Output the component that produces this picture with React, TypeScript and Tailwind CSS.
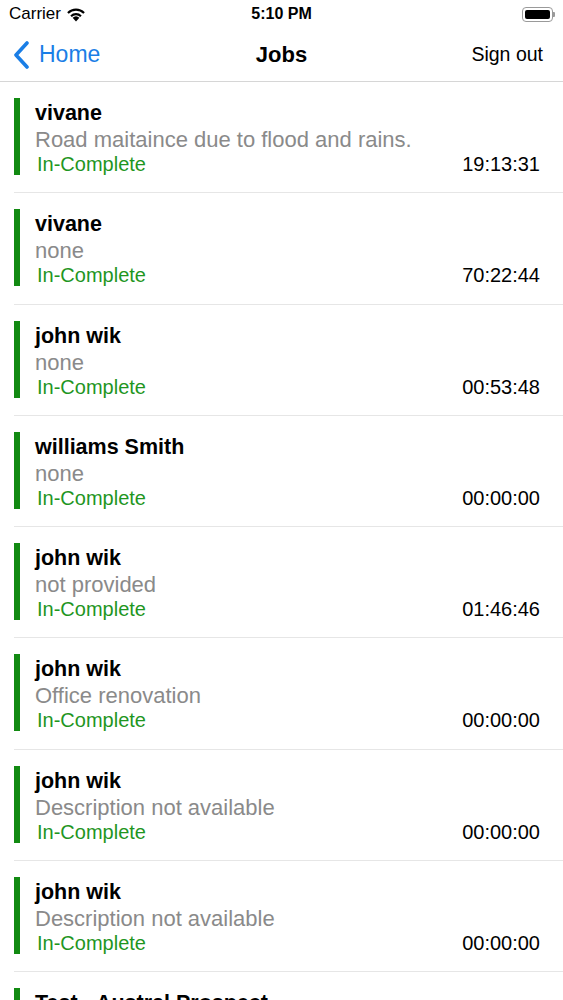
import React from "react";

type Job = {
    name: string;
    description: string;
    status: string;
    time: string;
};

const jobs: Job[] = [
    { name: "vivane", description: "Road maitaince due to flood and rains.", status: "In-Complete", time: "19:13:31" },
    { name: "vivane", description: "none", status: "In-Complete", time: "70:22:44" },
    { name: "john wik", description: "none", status: "In-Complete", time: "00:53:48" },
    { name: "williams Smith", description: "none", status: "In-Complete", time: "00:00:00" },
    { name: "john wik", description: "not provided", status: "In-Complete", time: "01:46:46" },
    { name: "john wik", description: "Office renovation", status: "In-Complete", time: "00:00:00" },
    { name: "john wik", description: "Description not available", status: "In-Complete", time: "00:00:00" },
    { name: "john wik", description: "Description not available", status: "In-Complete", time: "00:00:00" },
    { name: "Test - Austral Prospect", description: "none", status: "In-Complete", time: "00:00:00" },
];

const StatusBar: React.FC = () => {
    return (
        <div className="flex items-center justify-between h-[28px] pl-[9px] pr-[8px] text-[17px] text-black">
            <div className="flex items-center gap-[5px]">
                <span>Carrier</span>
                <svg width="20" height="15" viewBox="0 0 20 15">
                    <path d="M10 14.5 L6.6 10.8 A5 5 0 0 1 13.4 10.8 Z" fill="#000" />
                    <path d="M4.3 8.4 A8.2 8.2 0 0 1 15.7 8.4 L14.2 10 A6.1 6.1 0 0 0 5.8 10 Z" fill="#000" />
                    <path d="M1.2 5.2 A12.6 12.6 0 0 1 18.8 5.2 L17.3 6.8 A10.4 10.4 0 0 0 2.7 6.8 Z" fill="#000" />
                </svg>
            </div>
            <span className="absolute left-0 right-0 text-center font-semibold text-[16px] pointer-events-none">5:10 PM</span>
            <div className="flex items-center">
                <div className="w-[31px] h-[15px] rounded-[4px] border border-[#9a9a9a] p-[2px]">
                    <div className="w-full h-full rounded-[2px] bg-black" />
                </div>
                <div className="w-[2px] h-[5px] rounded-r-[1px] bg-[#9a9a9a]" />
            </div>
        </div>
    );
};

const NavBar: React.FC = () => {
    return (
        <div className="relative flex items-center justify-between h-[54px] border-b border-[#d6d6d6] pl-[12px] pr-[20px]">
            <div className="flex items-center gap-[9px] text-[#1a7ee6] text-[23px]">
                <svg width="18" height="28" viewBox="0 0 18 28">
                    <path d="M15 2 L4 14 L15 26" stroke="#1a7ee6" strokeWidth="3.6" fill="none" strokeLinecap="round" strokeLinejoin="round" />
                </svg>
                <span>Home</span>
            </div>
            <span className="absolute left-0 right-0 text-center font-bold text-[22px] pointer-events-none">Jobs</span>
            <span className="text-[19.5px] text-black">Sign out</span>
        </div>
    );
};

const JobRow: React.FC<{ job: Job }> = ({ job }) => {
    return (
        <div className="h-[111.25px] ml-[14px] border-b border-[#e6e6e6] pt-[16px] flex">
            <div className="w-[6px] h-[77px] bg-[#128a12]" />
            <div className="flex-1 pl-[15px] pr-[23px] flex flex-col">
                <div className="h-[28px] leading-[28px] text-[21.5px] font-bold text-black mt-[1px]">{job.name}</div>
                <div className="h-[25px] leading-[25px] text-[22px] text-[#8a8a8a] whitespace-nowrap">{job.description}</div>
                <div className="flex justify-between items-center h-[24px]">
                    <span className="pl-[2px] text-[20px] text-[#1f961f]">{job.status}</span>
                    <span className="text-[20px] text-black">{job.time}</span>
                </div>
            </div>
        </div>
    );
};

export default function App() {
    return (
        <div
            className="relative w-[563px] h-[1000px] overflow-hidden bg-white"
            style={{ fontFamily: '"Liberation Sans", Arial, sans-serif' }}
        >
            <StatusBar />
            <NavBar />
            <div className="flex flex-col">
                {jobs.map((job, i) => (
                    <JobRow key={i} job={job} />
                ))}
            </div>
        </div>
    );
}
